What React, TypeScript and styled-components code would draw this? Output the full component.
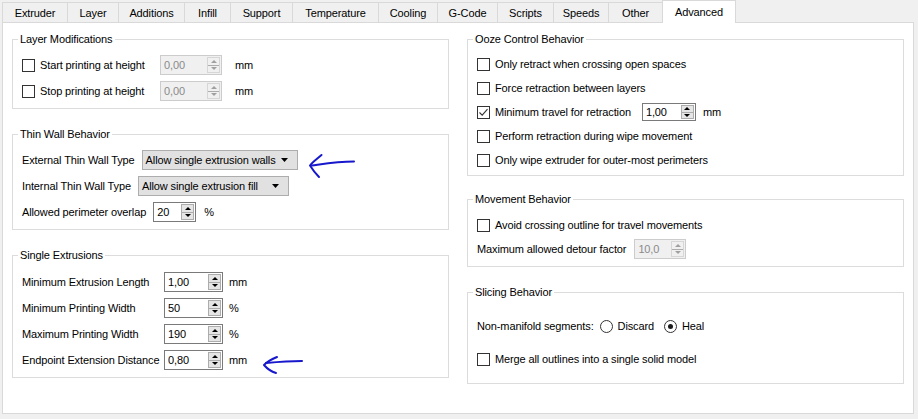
import React from "react";
import styled, { createGlobalStyle } from "styled-components";

const GlobalStyle = createGlobalStyle`
  html, body { margin: 0; padding: 0; background: #f0f0f0; }
  body { font-family: "Liberation Sans", Arial, sans-serif; font-size: 11px; letter-spacing: -0.12px; color: #000; }
  * { box-sizing: border-box; }
`;

const Page = styled.div`
  width: 918px;
  height: 419px;
  padding-left: 2px;
  overflow: hidden;
`;

const TabBar = styled.div`
  display: flex;
  align-items: flex-end;
  height: 22px;
`;

const Tab = styled.div<{ $w: number; $active?: boolean }>`
  position: relative;
  z-index: ${(p) => (p.$active ? 1 : 0)};
  width: ${(p) => p.$w}px;
  height: ${(p) => (p.$active ? 23 : 20)}px;
  margin-right: -1px;
  margin-bottom: ${(p) => (p.$active ? -1 : 0)}px;
  border: 1px solid #d9d9d9;
  border-bottom: none;
  background: ${(p) => (p.$active ? "#ffffff" : "#f0f0f0")};
  display: flex;
  align-items: center;
  justify-content: center;
  white-space: nowrap;
`;

const Panel = styled.div`
  width: 912px;
  height: 392px;
  border: 1px solid #d9d9d9;
  background: #fff;
  padding: 16px 9px 0 9px;
  display: flex;
  gap: 18px;
  align-items: flex-start;
`;

const Column = styled.div`
  width: 437px;
  display: flex;
  flex-direction: column;
`;

const GroupBox = styled.div<{ $mt: number; $pt: number; $pb: number; $gap: number }>`
  position: relative;
  margin-top: ${(p) => p.$mt}px;
  border: 1px solid #dcdcdc;
  padding: ${(p) => p.$pt}px 9px ${(p) => p.$pb}px 9px;
  display: flex;
  flex-direction: column;
  gap: ${(p) => p.$gap}px;
`;

const GroupTitle = styled.span`
  position: absolute;
  top: -7px;
  left: 5px;
  padding: 0 2px;
  line-height: 13px;
  background: #fff;
  white-space: nowrap;
`;

const Row = styled.div<{ $gap?: number }>`
  display: flex;
  align-items: center;
  height: 20px;
  gap: ${(p) => p.$gap ?? 0}px;
`;

const Cell = styled.div<{ $w?: number; $ml?: number }>`
  ${(p) => (p.$w ? `width: ${p.$w}px; flex: none;` : "")}
  margin-left: ${(p) => p.$ml ?? 0}px;
  display: flex;
  align-items: center;
  gap: 5px;
`;

const Label = styled.span`
  white-space: nowrap;
`;

const Unit = styled.span<{ $ml: number }>`
  margin-left: ${(p) => p.$ml}px;
  white-space: nowrap;
`;

const Box = styled.span`
  width: 13px;
  height: 13px;
  flex: none;
  border: 1px solid #333333;
  background: #fff;
  display: inline-flex;
  align-items: center;
  justify-content: center;
`;

const RadioCircle = styled.span<{ $checked?: boolean }>`
  width: 13px;
  height: 13px;
  flex: none;
  border-radius: 50%;
  border: 1px solid #333333;
  background: #fff;
  display: inline-flex;
  align-items: center;
  justify-content: center;
  &::after {
    content: "";
    display: ${(p) => (p.$checked ? "block" : "none")};
    width: 5px;
    height: 5px;
    border-radius: 50%;
    background: #1a1a1a;
  }
`;

const SpinFrame = styled.div<{ $w: number; $h: number; $ml: number; $disabled?: boolean }>`
  width: ${(p) => p.$w}px;
  height: ${(p) => p.$h}px;
  margin-left: ${(p) => p.$ml}px;
  flex: none;
  border: 1px solid ${(p) => (p.$disabled ? "#cccccc" : "#7a7a7a")};
  background: ${(p) => (p.$disabled ? "#f0f0f0" : "#ffffff")};
  color: ${(p) => (p.$disabled ? "#8a8a8a" : "#000000")};
  display: flex;
  align-items: center;
  padding: 1px 1px 1px 3px;
`;

const SpinValue = styled.span`
  flex: 1;
  white-space: nowrap;
`;

const SpinButtons = styled.div<{ $disabled?: boolean }>`
  width: 13px;
  align-self: stretch;
  display: flex;
  flex-direction: column;
  border: 1px solid ${(p) => (p.$disabled ? "#d6d6d6" : "#acacac")};
  background: ${(p) => (p.$disabled ? "#f0f0f0" : "#e5e5e5")};
`;

const SpinHalf = styled.div<{ $disabled?: boolean }>`
  flex: 1;
  display: flex;
  align-items: center;
  justify-content: center;
  & + & {
    border-top: 1px solid ${(p) => (p.$disabled ? "#d6d6d6" : "#acacac")};
  }
`;

const Tri = styled.span<{ $up?: boolean; $color: string }>`
  width: 0;
  height: 0;
  border-left: 3px solid transparent;
  border-right: 3px solid transparent;
  ${(p) => (p.$up ? `border-bottom: 3px solid ${p.$color};` : `border-top: 3px solid ${p.$color};`)}
`;

const ComboFrame = styled.div<{ $w: number }>`
  width: ${(p) => p.$w}px;
  height: 20px;
  flex: none;
  border: 1px solid #adadad;
  background: #e1e1e1;
  display: flex;
  align-items: center;
  justify-content: space-between;
  padding: 0 9px 0 3px;
  white-space: nowrap;
`;

const ArrowSvg = styled.svg<{ $ml: number }>`
  flex: none;
  margin-left: ${(p) => p.$ml}px;
  overflow: visible;
`;

const CheckBox = ({ checked }: { checked?: boolean }) => (
  <Box>
    {checked && (
      <svg width="11" height="11" viewBox="0 0 11 11">
        <path d="M1.5 5.5 L4.2 8.2 L9.5 2.2" fill="none" stroke="#333" strokeWidth="1.1" />
      </svg>
    )}
  </Box>
);

const SpinBox = ({
  value,
  w,
  h = 20,
  ml = 0,
  disabled,
}: {
  value: string;
  w: number;
  h?: number;
  ml?: number;
  disabled?: boolean;
}) => {
  const c = disabled ? "#a0a0a0" : "#000";
  return (
    <SpinFrame $w={w} $h={h} $ml={ml} $disabled={disabled}>
      <SpinValue>{value}</SpinValue>
      <SpinButtons $disabled={disabled}>
        <SpinHalf $disabled={disabled}>
          <Tri $up $color={c} />
        </SpinHalf>
        <SpinHalf $disabled={disabled}>
          <Tri $color={c} />
        </SpinHalf>
      </SpinButtons>
    </SpinFrame>
  );
};

const Combo = ({ value, w }: { value: string; w: number }) => (
  <ComboFrame $w={w}>
    <span>{value}</span>
    <svg width="7" height="4" viewBox="0 0 7 4">
      <polygon points="0,0 7,0 3.5,4" fill="#000" />
    </svg>
  </ComboFrame>
);

const BLUE = "#1717cc";

const HandArrow = ({ ml, big }: { ml: number; big?: boolean }) =>
  big ? (
    <ArrowSvg $ml={ml} width="46" height="20" viewBox="0 0 46 20">
      <path d="M12.5 5 C 8.5 8.5, 3.5 12, 1 15.5 C 3.5 19.5, 6.5 23.5, 10 27" fill="none" stroke={BLUE} strokeWidth="2" strokeLinecap="round" strokeLinejoin="round" />
      <path d="M3 15.5 C 14 14, 28 11.5, 45 11.5" fill="none" stroke={BLUE} strokeWidth="2" strokeLinecap="round" />
    </ArrowSvg>
  ) : (
    <ArrowSvg $ml={ml} width="42" height="20" viewBox="0 0 42 20">
      <path d="M15 7 C 10 9, 5 12, 2 15 C 5 18.5, 9 21.5, 14 23" fill="none" stroke={BLUE} strokeWidth="2" strokeLinecap="round" strokeLinejoin="round" />
      <path d="M4 13 C 15 12, 28 11, 40 11" fill="none" stroke={BLUE} strokeWidth="2" strokeLinecap="round" />
    </ArrowSvg>
  );

const tabs: [string, number][] = [
  ["Extruder", 66],
  ["Layer", 52],
  ["Additions", 67],
  ["Infill", 47],
  ["Support", 63],
  ["Temperature", 87],
  ["Cooling", 60],
  ["G-Code", 61],
  ["Scripts", 57],
  ["Speeds", 56],
  ["Other", 55],
  ["Advanced", 74],
];

export default function App() {
  return (
    <Page>
      <GlobalStyle />
      <TabBar>
        {tabs.map(([name, w]) => (
          <Tab key={name} $w={w} $active={name === "Advanced"}>
            {name}
          </Tab>
        ))}
      </TabBar>
      <Panel>
        <Column>
          <GroupBox $mt={0} $pt={15} $pb={7} $gap={6}>
            <GroupTitle>Layer Modifications</GroupTitle>
            <Row>
              <Cell $w={132}>
                <CheckBox />
                <Label>Start printing at height</Label>
              </Cell>
              <SpinBox value="0,00" w={62} ml={6} disabled />
              <Unit $ml={13}>mm</Unit>
            </Row>
            <Row>
              <Cell $w={132}>
                <CheckBox />
                <Label>Stop printing at height</Label>
              </Cell>
              <SpinBox value="0,00" w={62} ml={6} disabled />
              <Unit $ml={13}>mm</Unit>
            </Row>
          </GroupBox>

          <GroupBox $mt={25} $pt={15} $pb={7} $gap={6}>
            <GroupTitle>Thin Wall Behavior</GroupTitle>
            <Row $gap={7}>
              <Label>External Thin Wall Type</Label>
              <Combo value="Allow single extrusion walls" w={156} />
              <HandArrow ml={4} big />
            </Row>
            <Row $gap={7}>
              <Label>Internal Thin Wall Type</Label>
              <Combo value="Allow single extrusion fill" w={151} />
            </Row>
            <Row $gap={7}>
              <Label>Allowed perimeter overlap</Label>
              <SpinBox value="20" w={43} />
              <Unit $ml={1}>%</Unit>
            </Row>
          </GroupBox>

          <GroupBox $mt={25} $pt={16} $pb={7} $gap={6}>
            <GroupTitle>Single Extrusions</GroupTitle>
            <Row>
              <Cell $w={142}>
                <Label>Minimum Extrusion Length</Label>
              </Cell>
              <SpinBox value="1,00" w={59} />
              <Unit $ml={6}>mm</Unit>
            </Row>
            <Row>
              <Cell $w={142}>
                <Label>Minimum Printing Width</Label>
              </Cell>
              <SpinBox value="50" w={59} />
              <Unit $ml={6}>%</Unit>
            </Row>
            <Row>
              <Cell $w={142}>
                <Label>Maximum Printing Width</Label>
              </Cell>
              <SpinBox value="190" w={59} />
              <Unit $ml={6}>%</Unit>
            </Row>
            <Row>
              <Cell $w={142}>
                <Label>Endpoint Extension Distance</Label>
              </Cell>
              <SpinBox value="0,80" w={59} />
              <Unit $ml={6}>mm</Unit>
              <HandArrow ml={15} />
            </Row>
          </GroupBox>
        </Column>

        <Column>
          <GroupBox $mt={0} $pt={14} $pb={5} $gap={4}>
            <GroupTitle>Ooze Control Behavior</GroupTitle>
            <Row>
              <Cell>
                <CheckBox />
                <Label>Only retract when crossing open spaces</Label>
              </Cell>
            </Row>
            <Row>
              <Cell>
                <CheckBox />
                <Label>Force retraction between layers</Label>
              </Cell>
            </Row>
            <Row>
              <Cell>
                <CheckBox checked />
                <Label>Minimum travel for retraction</Label>
              </Cell>
              <SpinBox value="1,00" w={54} h={18} ml={11} />
              <Unit $ml={7}>mm</Unit>
            </Row>
            <Row>
              <Cell>
                <CheckBox />
                <Label>Perform retraction during wipe movement</Label>
              </Cell>
            </Row>
            <Row>
              <Cell>
                <CheckBox />
                <Label>Only wipe extruder for outer-most perimeters</Label>
              </Cell>
            </Row>
          </GroupBox>

          <GroupBox $mt={23} $pt={15} $pb={7} $gap={4}>
            <GroupTitle>Movement Behavior</GroupTitle>
            <Row>
              <Cell>
                <CheckBox />
                <Label>Avoid crossing outline for travel movements</Label>
              </Cell>
            </Row>
            <Row>
              <Label>Maximum allowed detour factor</Label>
              <SpinBox value="10,0" w={52} ml={8} disabled />
            </Row>
          </GroupBox>

          <GroupBox $mt={25} $pt={23} $pb={14} $gap={13}>
            <GroupTitle>Slicing Behavior</GroupTitle>
            <Row>
              <Label>Non-manifold segments:</Label>
              <Cell $ml={6}>
                <RadioCircle />
                <Label>Discard</Label>
              </Cell>
              <Cell $ml={10}>
                <RadioCircle $checked />
                <Label>Heal</Label>
              </Cell>
            </Row>
            <Row>
              <Cell>
                <CheckBox />
                <Label>Merge all outlines into a single solid model</Label>
              </Cell>
            </Row>
          </GroupBox>
        </Column>
      </Panel>
    </Page>
  );
}
